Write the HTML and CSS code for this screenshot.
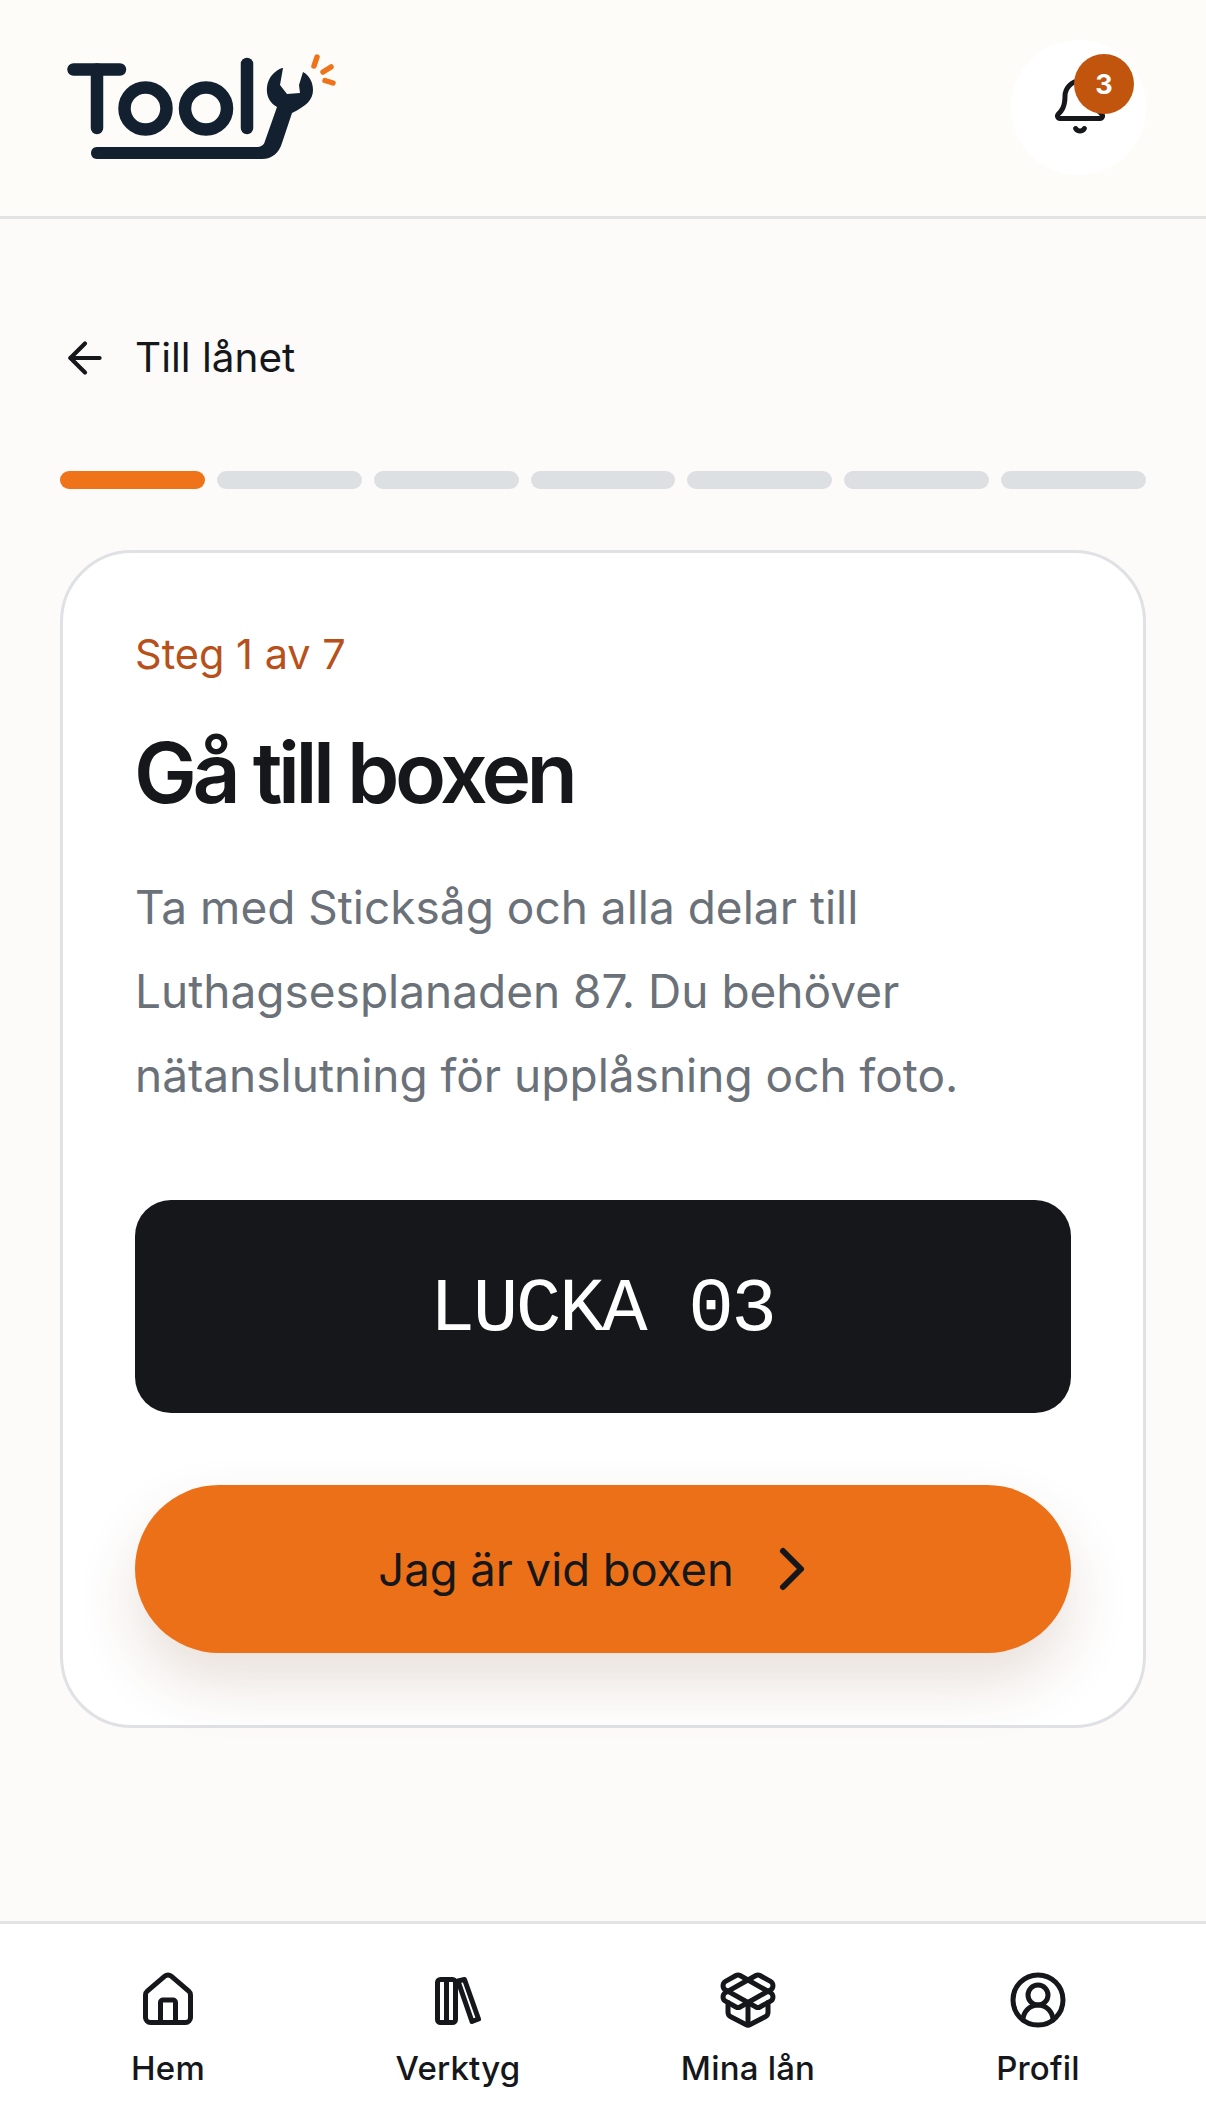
FILE: index.html
```html
<!DOCTYPE html>
<html lang="sv">
<head>
    <meta charset="UTF-8">
    <meta name="viewport" content="width=device-width, initial-scale=1.0">
    <title>Tooly - Steg 1 av 7</title>
    <link rel="stylesheet" href="styles.css">
</head>
<body>
    <header class="topbar">
      <svg class="logo" width="340" height="216" viewBox="0 0 340 216" role="img" aria-label="Tooly">
        <g fill="none" stroke="#12202f" stroke-width="12.5" stroke-linecap="round">
          <path d="M73.5 69.5H120"/>
          <path d="M97 69.5V128"/>
          <circle cx="145.5" cy="108.5" r="21"/>
          <circle cx="206" cy="108.5" r="21"/>
          <path d="M247 64V128"/>
        </g>
        <path fill="#12202f" d="M97 147H256C261 147 264 145 265 141L277 107C270 103 266 96 267 87C268 78 274 71 282 68H283L280 85L287 94L300 93L299 85L303 72C309 75 313 82 313 90C313 100 306 106 292 113L282 143C279 153 272 159 262 159H97C93 159 91 156 91 153C91 150 93 147 97 147Z"/>
        <g fill="none" stroke="#ef7319" stroke-width="5.5" stroke-linecap="round">
          <path d="M317 57L314 66"/>
          <path d="M331 67L323 72"/>
          <path d="M325 80.5L333 83"/>
        </g>
      </svg>
      <div class="bell">
        <svg class="ico-bell" width="60" height="60" viewBox="0 0 24 24" fill="none" stroke="#15171b" stroke-width="2" stroke-linecap="round" stroke-linejoin="round">
          <path d="M10.268 21a2 2 0 0 0 3.464 0"/>
          <path d="M3.262 15.326A1 1 0 0 0 4 17h16a1 1 0 0 0 .74-1.673C19.41 13.956 18 12.499 18 8A6 6 0 0 0 6 8c0 4.499-1.411 5.956-2.738 7.326"/>
        </svg>
        <span class="badge">3</span>
      </div>
    </header>

    <main class="content">
      <a class="back">
        <svg width="50" height="50" viewBox="0 0 24 24" fill="none" stroke="#15171b" stroke-width="2" stroke-linecap="round" stroke-linejoin="round">
          <path d="m12 19-7-7 7-7"/>
          <path d="M19 12H5"/>
        </svg>
        <span class="back-text">Till lånet</span>
      </a>

      <div class="progress">
        <span class="seg active"></span>
        <span class="seg"></span>
        <span class="seg"></span>
        <span class="seg"></span>
        <span class="seg"></span>
        <span class="seg"></span>
        <span class="seg"></span>
      </div>

      <section class="card">
        <p class="step">Steg 1 av 7</p>
        <h1 class="title">Gå till boxen</h1>
        <p class="desc">Ta med Sticksåg och alla delar till Luthagsesplanaden 87. Du behöver nätanslutning för upplåsning och foto.</p>
        <div class="locker">LUCKA 03</div>
        <button class="cta">
          <span>Jag är vid boxen</span>
          <svg width="72" height="72" viewBox="0 0 24 24" fill="none" stroke="#15171b" stroke-width="2" stroke-linecap="round" stroke-linejoin="round">
            <path d="m9 18 6-6-6-6"/>
          </svg>
        </button>
      </section>
    </main>

    <nav class="tabs">
      <a class="tab">
        <svg width="60" height="60" viewBox="0 0 24 24" fill="none" stroke="#15171b" stroke-width="2" stroke-linecap="round" stroke-linejoin="round">
          <path d="M15 21v-8a1 1 0 0 0-1-1h-4a1 1 0 0 0-1 1v8"/>
          <path d="M3 10a2 2 0 0 1 .709-1.528l7-5.999a2 2 0 0 1 2.582 0l7 5.999A2 2 0 0 1 21 10v9a2 2 0 0 1-2 2H5a2 2 0 0 1-2-2z"/>
        </svg>
        <span>Hem</span>
      </a>
      <a class="tab">
        <svg width="60" height="60" viewBox="0 0 60 60" fill="none" stroke="#15171b" stroke-width="5" stroke-linecap="round" stroke-linejoin="round">
          <rect x="9.5" y="9.5" width="18" height="43" rx="3"/>
          <path d="M18.5 9.5V52.5"/>
          <path d="M30 11L36.5 9.5L50.5 49L44 51.5Z"/>
        </svg>
        <span>Verktyg</span>
      </a>
      <a class="tab">
        <svg width="60" height="60" viewBox="0 0 24 24" fill="none" stroke="#15171b" stroke-width="2" stroke-linecap="round" stroke-linejoin="round">
          <path d="M12 22v-9"/>
          <path d="M15.17 2.21a1.67 1.67 0 0 1 1.63 0L21 4.57a1.93 1.93 0 0 1 0 3.36L8.82 14.79a1.655 1.655 0 0 1-1.64 0L3 12.43a1.93 1.93 0 0 1 0-3.36z"/>
          <path d="M20 13v3.87a2.06 2.06 0 0 1-1.11 1.83l-6 3.08a1.93 1.93 0 0 1-1.78 0l-6-3.08A2.06 2.06 0 0 1 4 16.87V13"/>
          <path d="M21 12.43a1.93 1.93 0 0 0 0-3.36L8.83 2.2a1.64 1.64 0 0 0-1.63 0L3 4.57a1.93 1.93 0 0 0 0 3.36l12.18 6.86a1.636 1.636 0 0 0 1.63 0z"/>
        </svg>
        <span>Mina lån</span>
      </a>
      <a class="tab">
        <svg width="60" height="60" viewBox="0 0 24 24" fill="none" stroke="#15171b" stroke-width="2" stroke-linecap="round" stroke-linejoin="round">
          <path d="M18 20a6 6 0 0 0-12 0"/>
          <circle cx="12" cy="10" r="4"/>
          <circle cx="12" cy="12" r="10"/>
        </svg>
        <span>Profil</span>
      </a>
    </nav>
</body>
</html>
```

FILE: styles.css
```css
* {
  box-sizing: border-box;
}
html, body {
  margin: 0;
  height: 100%;
}
body {
  display: flex;
  flex-direction: column;
  height: 2124px;
  overflow: hidden;
  background-color: #fdfbf9;
  color: #15171b;
  font-family: Inter, "Liberation Sans", sans-serif;
}
svg {
  display: block;
  flex-shrink: 0;
}

/* top bar */
.topbar {
  display: flex;
  justify-content: space-between;
  align-items: flex-start;
  height: 219px;
  padding: 40px 60px 0 0;
  background-color: #fdfcf9;
  border-bottom: 3px solid #e2e3e3;
}
.logo {
  margin-top: -40px;
}
.bell {
  position: relative;
  display: flex;
  justify-content: center;
  align-items: center;
  width: 135px;
  height: 135px;
  border-radius: 50%;
  background-color: #ffffff;
}
.ico-bell {
  margin: -3px 0 0 2px;
}
.badge {
  position: absolute;
  top: 14px;
  left: 63px;
  display: flex;
  justify-content: center;
  align-items: center;
  width: 60px;
  height: 60px;
  border-radius: 50%;
  background-color: #c2550d;
  color: #fff;
  font-size: 27px;
  font-weight: 700;
}

/* content */
.content {
  flex: 1;
  padding: 115px 60px 0;
}
.back {
  display: flex;
  align-items: center;
  gap: 25px;
  height: 48px;
  font-size: 40.5px;
}
.back-text {
  margin-top: -2px;
}
.progress {
  display: flex;
  gap: 12px;
  margin-top: 89px;
}
.seg {
  flex: 1;
  height: 18px;
  border-radius: 9px;
  background-color: #dde0e3;
}
.seg.active {
  background-color: #ef7319;
}
.card {
  margin-top: 61px;
  padding: 72px;
  border: 3px solid #dfe1e5;
  border-radius: 72px;
  background-color: #fff;
}
.step {
  margin: 0;
  font-size: 41.5px;
  line-height: 58px;
  color: #b8501a;
}
.title {
  margin: 40px 0 0 -1px;
  font-size: 84px;
  line-height: 100px;
  font-weight: 600;
  letter-spacing: -4.5px;
}
.desc {
  margin: 42px 0 0;
  font-size: 46px;
  line-height: 84px;
  color: #6b7178;
}
.locker {
  display: flex;
  justify-content: center;
  align-items: center;
  height: 213px;
  margin-top: 83px;
  padding: 6px 2px 0 0;
  border-radius: 36px;
  background-color: #15171b;
  color: #fff;
  font-family: "Liberation Mono", "DejaVu Sans Mono", monospace;
  font-size: 76px;
  letter-spacing: -2.5px;
}
.cta {
  display: flex;
  justify-content: center;
  align-items: center;
  gap: 22px;
  width: 100%;
  height: 168px;
  margin-top: 72px;
  border: 0;
  border-radius: 84px;
  background-color: #ec7018;
  box-shadow: 0 30px 60px rgba(120, 60, 30, 0.16);
  color: #15171b;
  font-family: inherit;
  font-size: 45.4px;
}

/* bottom tabs */
.tabs {
  display: grid;
  grid-template-columns: repeat(4, 1fr);
  height: 203px;
  padding: 46px 23px 0;
  background-color: #fff;
  border-top: 3px solid #e2e3e3;
}
.tab {
  display: flex;
  flex-direction: column;
  align-items: center;
  gap: 18px;
  font-size: 33px;
  font-weight: 450;
  line-height: 40px;
  letter-spacing: 0.2px;
}
```
